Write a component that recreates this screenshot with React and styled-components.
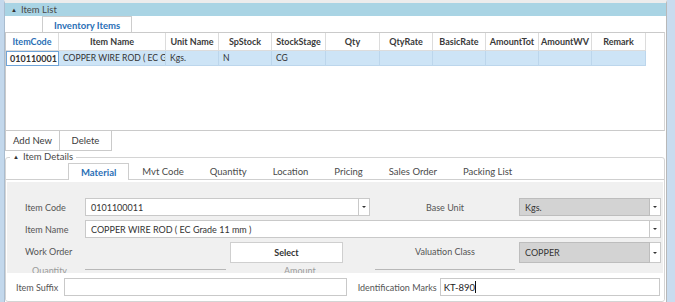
import React from 'react';
import styled, {createGlobalStyle} from 'styled-components';

const GlobalStyle = createGlobalStyle`
    html, body {
        margin: 0;
        padding: 0;
        background: #fff;
    }
    body {
        font-family: "Lato", "Noto Sans", sans-serif;
        font-size: 9px;
        color: #3a3a3a;
    }
`;

const Window = styled.div`
    width: 675px;
    height: 302px;
    box-sizing: border-box;
    display: flex;
    border-left: 4px solid #c3d8ec;
    border-right: 8px solid #c9dcef;
    background: #fff;
    overflow: hidden;
`;
const Panel = styled.div`
    flex: 1;
    display: flex;
    flex-direction: column;
    border-left: 1px solid #a9bccf;
    border-right: 1px solid #b8b8b8;
    border-top: 3px solid #ececec;
    min-width: 0;
`;
const SectionBar = styled.div`
    height: 13px;
    display: flex;
    align-items: center;
    gap: 4px;
    padding-left: 6px;
    background: #a9d4e4;
    color: #4a4a4a;
    font-size: 9.5px;
`;
const Arrow = styled.span`
    font-size: 6px;
    color: #333;
`;
const TabStrip = styled.div`
    display: flex;
    padding-left: ${p => p.$indent}px;
    height: 16px;
    border-bottom: ${p => p.$line ? '1px solid #cfcfcf' : 'none'};
    font-size: 9.5px;
`;
const Tab = styled.div`
    display: flex;
    align-items: center;
    padding: 0 ${p => p.$pad}px;
    color: ${p => p.$active ? '#2a6fb6' : '#4a4a4a'};
    font-weight: ${p => p.$active ? 700 : 400};
    background: #fff;
    border: 1px solid ${p => p.$active ? '#cdcdcd' : 'transparent'};
    border-bottom: none;
    margin-bottom: ${p => p.$active ? '-1px' : '0'};
`;
const Grid = styled.div`
    height: 99px;
    box-sizing: border-box;
    border: 1px solid #cacaca;
    border-right-color: #d6d6d6;
    margin-right: 1px;
`;
const GridRow = styled.div`
    display: grid;
    grid-template-columns: 53px 107px 53px 53px 54px 54px 53px 53px 53px 53px 54px;
    height: ${p => p.$h}px;
`;
const HeadCell = styled.div`
    display: flex;
    align-items: center;
    justify-content: center;
    font-weight: 700;
    color: ${p => p.$focus ? '#2a6fb6' : '#3a3a3a'};
    border-right: 1px solid #dcdcdc;
    border-bottom: 1px solid #dcdcdc;
    white-space: nowrap;
    overflow: hidden;
`;
const Cell = styled.div`
    display: flex;
    align-items: center;
    padding-left: ${p => p.$focus ? 3 : 4}px;
    background: ${p => p.$focus ? '#fff' : '#cde4f6'};
    border-right: 1px solid ${p => p.$focus ? '#6fa4d8' : '#bcd6ec'};
    border-left: ${p => p.$focus ? '1px solid #6fa4d8' : 'none'};
    border-top: ${p => p.$focus ? '1px solid #6fa4d8' : 'none'};
    border-bottom: 1px solid ${p => p.$focus ? '#6fa4d8' : '#bcd6ec'};
    font-weight: ${p => p.$focus ? 700 : 400};
    font-size: ${p => p.$focus ? 9 : 8.6}px;
    color: #333;
    white-space: nowrap;
    overflow: hidden;
    box-sizing: border-box;
`;
const ButtonRow = styled.div`
    display: flex;
    margin-top: -1px;
    height: 21px;
`;
const GridButton = styled.div`
    width: ${p => p.$w}px;
    box-sizing: border-box;
    display: flex;
    align-items: center;
    justify-content: center;
    border: 1px solid #cacaca;
    margin-right: -1px;
    background: #fff;
    color: #3a3a3a;
    font-size: 9.5px;
`;
const Group = styled.fieldset`
    margin: 0 1px 0 0;
    padding: 0;
    border: 1px solid #d4d4d4;
    border-radius: 3px;
    display: flex;
    flex-direction: column;
    min-width: 0;
    flex: 1;
`;
const Legend = styled.legend`
    margin-left: 4px;
    padding: 0 3px;
    display: flex;
    align-items: center;
    gap: 4px;
    color: #4a4a4a;
    line-height: 12px;
    font-size: 9.5px;
`;
const TabBody = styled.div`
    height: 91px;
    margin: 2px 1px 0;
    background: #f0f0f0;
    overflow: hidden;
    padding: 16px 0 0 18px;
    box-sizing: border-box;
`;
const Form = styled.div`
    display: grid;
    grid-template-columns: 60px 145px 113px 32px 140px 146px;
    grid-auto-rows: 18px;
    row-gap: 4px;
    align-items: center;
`;
const Label = styled.div`
    color: #555;
    white-space: nowrap;
    text-align: ${p => p.$center ? 'center' : 'left'};
    grid-column: ${p => p.$col || 'auto'};
`;
const Combo = styled.div`
    grid-column: ${p => p.$col};
    display: flex;
    height: ${p => p.$h || 18}px;
    align-self: start;
    box-sizing: border-box;
    margin-left: ${p => p.$ml || 0}px;
    margin-right: ${p => p.$mr || 0}px;
`;
const Field = styled.div`
    flex: 1;
    display: flex;
    align-items: center;
    padding-left: 5px;
    border: 1px solid ${p => p.$gray ? '#bdbdbd' : '#c9c9c9'};
    background: ${p => p.$gray ? '#d3d3d3' : '#fff'};
    color: #333;
    white-space: nowrap;
    overflow: hidden;
`;
const DropButton = styled.div`
    width: 10px;
    display: flex;
    align-items: center;
    justify-content: center;
    border: 1px solid #c9c9c9;
    border-left: none;
    background: #fff;
    &::after {
        content: '';
        border-left: 2px solid transparent;
        border-right: 2px solid transparent;
        border-top: 2px solid #333;
    }
`;
const SelectButton = styled.div`
    grid-column: 3;
    height: 21px;
    align-self: start;
    box-sizing: border-box;
    display: flex;
    align-items: center;
    justify-content: center;
    background: #fff;
    border: 1px solid #cfcfcf;
    color: #333;
    font-weight: 700;
`;
const HiddenLine = styled.div`
    grid-column: ${p => p.$col};
    align-self: start;
    margin-top: 5px;
    height: 1px;
    background: #b8b8b8;
    margin-right: ${p => p.$mr || 0}px;
`;
const Stub = styled.div`
    grid-column: ${p => p.$col};
    align-self: start;
    color: #9a9a9a;
    margin-top: 1px;
    padding-left: ${p => p.$pl || 0}px;
`;
const FooterRow = styled.div`
    height: 27px;
    box-sizing: border-box;
    display: flex;
    align-items: center;
    padding: 1px 4px 0 10px;
    background: #fff;
`;
const FooterInput = styled.div`
    width: ${p => p.$w}px;
    height: 18px;
    box-sizing: border-box;
    border: 1px solid #c9c9c9;
    margin-left: ${p => p.$ml}px;
    display: flex;
    align-items: center;
    padding-left: 3px;
    color: #222;
    font-size: 9.5px;
`;
const Caret = styled.span`
    width: 1px;
    height: 12px;
    background: #111;
`;

const columns = ['ItemCode', 'Item Name', 'Unit Name', 'SpStock', 'StockStage', 'Qty', 'QtyRate', 'BasicRate', 'AmountTot', 'AmountWV', 'Remark'];
const rowData = ['010110001', 'COPPER WIRE ROD ( EC G', 'Kgs.', 'N', 'CG', '', '', '', '', '', ''];
const detailTabs = ['Material', 'Mvt Code', 'Quantity', 'Location', 'Pricing', 'Sales Order', 'Packing List'];

export default function App() {
    return (
        <>
            <GlobalStyle/>
            <Window>
                <Panel>
                    <SectionBar><Arrow>▲</Arrow>Item List</SectionBar>
                    <TabStrip $indent={37}>
                        <Tab $active $pad={11}>Inventory Items</Tab>
                    </TabStrip>
                    <Grid>
                        <GridRow $h={18}>
                            {columns.map((c, i) => <HeadCell key={c} $focus={i === 0}>{c}</HeadCell>)}
                        </GridRow>
                        <GridRow $h={15}>
                            {rowData.map((v, i) => <Cell key={i} $focus={i === 0}>{v}</Cell>)}
                        </GridRow>
                    </Grid>
                    <ButtonRow>
                        <GridButton $w={55}>Add New</GridButton>
                        <GridButton $w={53}>Delete</GridButton>
                    </ButtonRow>
                    <Group>
                        <Legend><Arrow>▲</Arrow>Item Details</Legend>
                        <TabStrip $indent={62} $line>
                            {detailTabs.map((t, i) => <Tab key={t} $active={i === 0} $pad={12}>{t}</Tab>)}
                        </TabStrip>
                        <TabBody>
                            <Form>
                                <Label>Item Code</Label>
                                <Combo $col="2 / 5" $mr={5}>
                                    <Field>0101100011</Field>
                                    <DropButton/>
                                </Combo>
                                <Label $col={5} $center>Base Unit</Label>
                                <Combo $col={6} $ml={4}>
                                    <Field $gray>Kgs.</Field>
                                    <DropButton/>
                                </Combo>

                                <Label>Item Name</Label>
                                <Combo $col="2 / 7">
                                    <Field>COPPER WIRE ROD ( EC Grade 11 mm )</Field>
                                    <DropButton/>
                                </Combo>

                                <Label>Work Order</Label>
                                <SelectButton>Select</SelectButton>
                                <Label $col={5} $center>Valuation Class</Label>
                                <Combo $col={6} $ml={4} $h={21}>
                                    <Field $gray>COPPER</Field>
                                    <DropButton/>
                                </Combo>

                                <Stub $col={1} $pl={7}>Quantity</Stub>
                                <HiddenLine $col={2} $mr={4}/>
                                <Stub $col={3} $pl={54}>Amount</Stub>
                                <HiddenLine $col={5}/>
                            </Form>
                        </TabBody>
                        <FooterRow>
                            <Label>Item Suffix</Label>
                            <FooterInput $w={287} $ml={6}/>
                            <Label style={{marginLeft: 11}}>Identification Marks</Label>
                            <FooterInput $w={224} $ml={3}>KT-890<Caret/></FooterInput>
                        </FooterRow>
                    </Group>
                </Panel>
            </Window>
        </>
    );
}
